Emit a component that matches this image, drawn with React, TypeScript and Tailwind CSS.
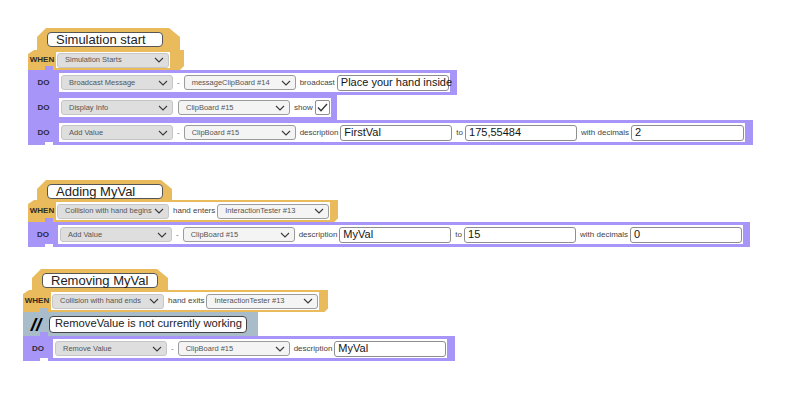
import clsx from "clsx";
import type { ReactNode } from "react";

// Block colours
// yellow = event hat, purple = action rows, slate = comment row

function Chevron() {
  return (
    <svg width="10" height="6" viewBox="0 0 10 6" className="shrink-0">
      <path d="M1 1l4 4 4-4" fill="none" stroke="#3a3a3a" strokeWidth="1.1" />
    </svg>
  );
}

function Select({ children, light }: { children: ReactNode; light?: boolean }) {
  return (
    <div
      className={clsx(
        "flex h-[15px] w-[112px] shrink-0 items-center justify-between rounded-[3px] border pl-[7px] pr-[4px] text-[7.5px] leading-none whitespace-nowrap text-[#555]",
        light ? "border-[#9c9c9c] bg-[#f4f4f4]" : "border-[#c6c6c6] bg-[#dedede]"
      )}
    >
      <span>{children}</span>
      <Chevron />
    </div>
  );
}

function Field({ children, wide }: { children: ReactNode; wide?: boolean }) {
  return (
    <div
      className={clsx(
        "flex h-[16px] shrink-0 items-center rounded-[3px] border border-[#8e8e8e] bg-white pl-[3px] text-[11px] leading-none whitespace-nowrap text-[#151515]",
        wide ? "w-[113px]" : "w-[112px]"
      )}
    >
      {children}
    </div>
  );
}

function Label({ children }: { children: ReactNode }) {
  return <span className="shrink-0 pl-[2px] text-[8px] leading-none whitespace-nowrap text-[#444]">{children}</span>;
}

function Dash() {
  return <span className="shrink-0 px-[2px] text-[8px] leading-none text-[#666]">-</span>;
}

function Hat({ title, className }: { title: string; className: string }) {
  return (
    <div
      className={clsx(
        "flex items-start bg-[#eabb5c] pt-[4px] pl-[10px] [clip-path:polygon(9px_0,calc(100%_-_11px)_0,100%_9px,100%_100%,0_100%,0_9px)]",
        className
      )}
    >
      <div className="flex h-[15px] w-[116px] items-center rounded-[4px] border border-[#555] bg-white pl-[8px] text-[13px] leading-none whitespace-nowrap text-[#222]">
        {title}
      </div>
    </div>
  );
}

function WhenRow({ children, className }: { children: ReactNode; className: string }) {
  return (
    <div
      className={clsx(
        "flex items-stretch bg-[#eabb5c] py-[2px] [clip-path:polygon(6px_0,100%_0,100%_calc(100%_-_4px),calc(100%_-_4px)_100%,0_100%,0_4px)]",
        className
      )}
    >
      <div className="flex w-[28px] items-center justify-center text-[8px] font-bold leading-none text-[#2e2a22]">WHEN</div>
      <div className="flex items-center gap-[2px] bg-white px-[1px]">{children}</div>
    </div>
  );
}

function DoRow({ children, className, col }: { children: ReactNode; className: string; col: string }) {
  return (
    <div className={clsx("flex h-[25px] items-stretch bg-[#a796f8] py-[3px]", className)}>
      <div className={clsx("flex items-center justify-center text-[8px] font-bold leading-none text-[#2c2840]", col)}>DO</div>
      <div className="flex items-center gap-[2px] bg-white pl-[2px] pr-[1px]">{children}</div>
    </div>
  );
}

function Check() {
  return (
    <div className="flex h-[15px] w-[15px] shrink-0 items-center justify-center rounded-[2px] border border-[#8e8e8e] bg-white">
      <svg width="11" height="9" viewBox="0 0 11 9">
        <path d="M1 4.5l3 3.2L10 1" fill="none" stroke="#333" strokeWidth="1.3" />
      </svg>
    </div>
  );
}

// connector bump on top of a row, cut notch at the bottom of the stack
function Tab({ color }: { color: string }) {
  return <div className={clsx("absolute left-[17px] top-[-4px] h-[4px] w-[8px]", color)} />;
}

function Notch() {
  return <div className="absolute bottom-0 left-[17px] h-[3px] w-[8px] bg-white" />;
}

export default function App() {
  return (
    <div className="h-[398px] w-[804px] overflow-hidden bg-white font-['Liberation_Sans',Arial,sans-serif]">
      {/* Simulation start */}
      <div className="ml-[28px] mt-[28px] flex flex-col items-start">
        <Hat title="Simulation start" className="ml-[9px] h-[22px] w-[143px]" />
        <WhenRow className="h-[20px] w-[156px]">
          <Select>Simulation Starts</Select>
        </WhenRow>
        <div className="relative flex flex-col items-start">
          <Tab color="bg-[#a796f8]" />
          <DoRow col="w-[31px]" className="pr-[7px]">
            <Select>Broadcast Message</Select>
            <Dash />
            <Select light>messageClipBoard #14</Select>
            <Label>broadcast</Label>
            <Field>Place your hand inside</Field>
          </DoRow>
          <DoRow col="w-[31px]" className="pr-[6px]">
            <Select>Display Info</Select>
            <span className="w-[1px] shrink-0" />
            <Select light>ClipBoard #15</Select>
            <Label>show</Label>
            <Check />
          </DoRow>
          <DoRow col="w-[31px]" className="pr-[8px]">
            <Select>Add Value</Select>
            <Dash />
            <Select light>ClipBoard #15</Select>
            <Label>description</Label>
            <Field>FirstVal</Field>
            <Label>to</Label>
            <Field>175,55484</Field>
            <Label>with decimals</Label>
            <Field wide>2</Field>
          </DoRow>
          <Notch />
        </div>
      </div>

      {/* Adding MyVal */}
      <div className="ml-[28px] mt-[35px] flex flex-col items-start">
        <Hat title="Adding MyVal" className="ml-[9px] h-[20px] w-[135px]" />
        <WhenRow className="h-[22px] pr-[8px]">
          <Select>Collision with hand begins</Select>
          <Label>hand enters</Label>
          <Select light>InteractionTester #13</Select>
        </WhenRow>
        <div className="relative flex flex-col items-start">
          <Tab color="bg-[#a796f8]" />
          <DoRow col="w-[30px]" className="h-[24px] pr-[7px]">
            <Select>Add Value</Select>
            <Dash />
            <Select light>ClipBoard #15</Select>
            <Label>description</Label>
            <Field>MyVal</Field>
            <Label>to</Label>
            <Field>15</Field>
            <Label>with decimals</Label>
            <Field>0</Field>
          </DoRow>
          <Notch />
        </div>
      </div>

      {/* Removing MyVal */}
      <div className="ml-[23px] mt-[22px] flex flex-col items-start">
        <Hat title="Removing MyVal" className="ml-[9px] h-[21px] w-[136px]" />
        <WhenRow className="h-[22px] pr-[9px]">
          <Select>Collision with hand ends</Select>
          <Label>hand exits</Label>
          <Select light>InteractionTester #13</Select>
        </WhenRow>
        <div className="relative flex h-[24px] w-[235px] items-center bg-[#a9bcca]">
          <Tab color="bg-[#a9bcca]" />
          <span className="w-[26px] text-center text-[19px] font-bold italic leading-none text-black">//</span>
          <div className="flex h-[17px] w-[198px] items-center rounded-[4px] border border-[#444] bg-white pl-[5px] text-[11.2px] leading-none whitespace-nowrap text-[#222]">
            RemoveValue is not currently working
          </div>
        </div>
        <div className="relative flex flex-col items-start">
          <Tab color="bg-[#a796f8]" />
          <DoRow col="w-[30px]" className="h-[24px] pr-[8px]">
            <Select>Remove Value</Select>
            <Dash />
            <Select light>ClipBoard #15</Select>
            <Label>description</Label>
            <Field>MyVal</Field>
          </DoRow>
          <Notch />
        </div>
      </div>
    </div>
  );
}
